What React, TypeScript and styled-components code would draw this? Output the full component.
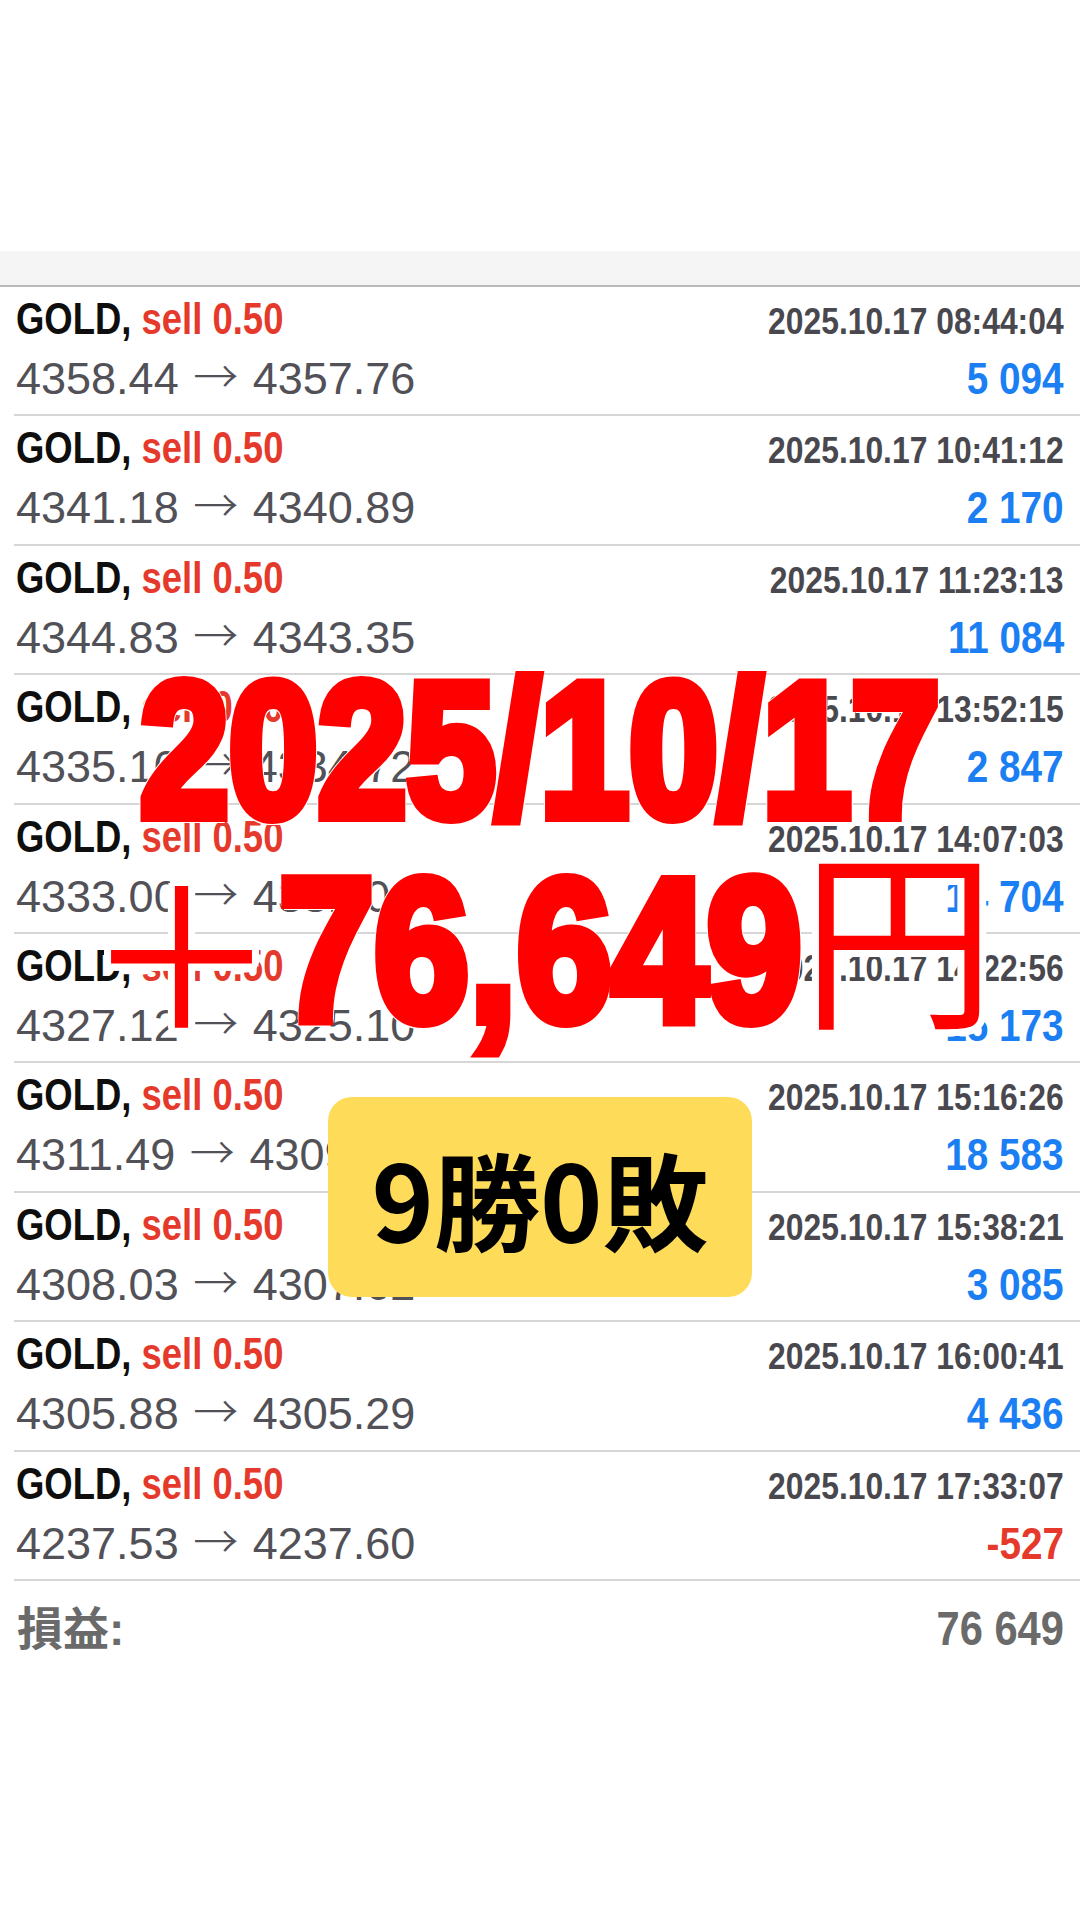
import React from "react";
import styled, { createGlobalStyle } from "styled-components";

const GlobalStyle = createGlobalStyle`
  html, body {
    margin: 0;
    padding: 0;
    background: #ffffff;
  }
  body {
    font-family: "Liberation Sans", Arial, "Noto Sans CJK JP", sans-serif;
  }
`;

const RED = "#e5392b";
const BLUE = "#1b7ff3";

// white outline round the big red caption
const halo = (r: number) =>
  Array.from({ length: 16 }, (_, i) => {
    const a = (i / 16) * Math.PI * 2;
    return `${(Math.cos(a) * r).toFixed(1)}px ${(Math.sin(a) * r).toFixed(1)}px 0 #fff`;
  }).join(", ");

const Page = styled.div`
  position: relative;
  width: 1080px;
  height: 1920px;
  padding-top: 251px;
  box-sizing: border-box;
  overflow: hidden;
  background: #ffffff;
`;

const HeaderBand = styled.div`
  height: 34px;
  background: #f5f5f5;
  border-bottom: 2px solid #b9b9b9;
`;

const List = styled.ul`
  list-style: none;
  margin: 0;
  padding: 0;
`;

const Row = styled.li`
  height: 129.4px;
  margin-left: 14px;
  padding: 2px 16px 0 2px;
  box-sizing: border-box;
  border-bottom: 2px solid #d6d6d6;
`;

const Line = styled.div`
  display: flex;
  justify-content: space-between;
  align-items: baseline;
  height: 60px;
  line-height: 60px;
  white-space: nowrap;
`;

const Instrument = styled.span`
  display: inline-block;
  font-weight: 700;
  font-size: 45px;
  color: #0e0e0e;
  transform: scaleX(0.81);
  transform-origin: left center;
`;

const Side = styled.span`
  color: ${RED};
`;

const Stamp = styled.span`
  display: inline-block;
  font-weight: 700;
  font-size: 37px;
  color: #48484e;
  transform: scaleX(0.86);
  transform-origin: right center;
`;

const Prices = styled.span`
  font-size: 45px;
  color: #515157;
`;

const Arrow = styled.span`
  font-family: "Noto Sans CJK JP", sans-serif;
  font-weight: 300;
  font-size: 45px;
  line-height: 0;
  margin: 0 2px;
`;

const Profit = styled.span<{ $loss?: boolean }>`
  display: inline-block;
  font-weight: 700;
  font-size: 45px;
  color: ${(p) => (p.$loss ? RED : BLUE)};
  transform: scaleX(0.86);
  transform-origin: right center;
`;

const TotalRow = styled.div`
  display: flex;
  justify-content: space-between;
  align-items: baseline;
  margin-left: 14px;
  padding: 5px 16px 0 3px;
  height: 84px;
  line-height: 84px;
`;

const TotalLabel = styled.span`
  font-family: "Liberation Sans", "Noto Sans CJK JP", sans-serif;
  font-weight: 700;
  font-size: 46px;
  color: #6a6a6a;
`;

const TotalValue = styled.span`
  display: inline-block;
  font-weight: 700;
  font-size: 49px;
  color: #6a6a6a;
  transform: scaleX(0.85);
  transform-origin: right center;
`;

const Headline = styled.div<{ $top: number }>`
  position: absolute;
  left: 0;
  right: 0;
  top: ${(p) => p.$top}px;
  display: flex;
  justify-content: center;
  align-items: center;
  white-space: nowrap;
  color: #ff0000;
  text-shadow: ${halo(7)};
  pointer-events: none;
`;

const HeavyDigits = styled.span<{ $size: number; $scale: number; $trim: number }>`
  position: relative;
  z-index: 1;
  display: inline-block;
  font-family: "Liberation Sans", Arial, sans-serif;
  font-weight: 700;
  font-size: ${(p) => p.$size}px;
  line-height: 1;
  margin: 0 ${(p) => -p.$trim}px;
  transform: scaleX(${(p) => p.$scale});
  -webkit-text-stroke: 12px #ff0000;
`;

const WideGlyph = styled.span<{ $shift: number }>`
  display: inline-block;
  font-family: "Noto Sans CJK JP", sans-serif;
  font-weight: 400;
  font-size: 194px;
  line-height: 1;
  transform: translateY(${(p) => p.$shift}px);
`;

const Badge = styled.div`
  position: absolute;
  left: 328px;
  top: 1097px;
  width: 424px;
  height: 200px;
  display: flex;
  align-items: center;
  justify-content: center;
  border-radius: 24px;
  background: #fedc5a;
  font-family: "Noto Sans CJK JP", sans-serif;
  font-weight: 700;
  font-size: 106px;
  line-height: 1;
  color: #000000;
`;

type Trade = {
  time: string;
  open: string;
  close: string;
  profit: string;
};

const trades: Trade[] = [
  { time: "08:44:04", open: "4358.44", close: "4357.76", profit: "5 094" },
  { time: "10:41:12", open: "4341.18", close: "4340.89", profit: "2 170" },
  { time: "11:23:13", open: "4344.83", close: "4343.35", profit: "11 084" },
  { time: "13:52:15", open: "4335.10", close: "4334.72", profit: "2 847" },
  { time: "14:07:03", open: "4333.00", close: "4331.04", profit: "14 704" },
  { time: "14:22:56", open: "4327.12", close: "4325.10", profit: "15 173" },
  { time: "15:16:26", open: "4311.49", close: "4309.01", profit: "18 583" },
  { time: "15:38:21", open: "4308.03", close: "4307.62", profit: "3 085" },
  { time: "16:00:41", open: "4305.88", close: "4305.29", profit: "4 436" },
  { time: "17:33:07", open: "4237.53", close: "4237.60", profit: "-527" },
];

const App: React.FC = () => {
  return (
    <Page>
      <GlobalStyle />
      <HeaderBand />
      <List>
        {trades.map((t) => (
          <Row key={t.time}>
            <Line>
              <Instrument>
                GOLD, <Side>sell 0.50</Side>
              </Instrument>
              <Stamp>2025.10.17 {t.time}</Stamp>
            </Line>
            <Line>
              <Prices>
                {t.open} <Arrow>→</Arrow> {t.close}
              </Prices>
              <Profit $loss={t.profit.startsWith("-")}>{t.profit}</Profit>
            </Line>
          </Row>
        ))}
      </List>
      <TotalRow>
        <TotalLabel>損益:</TotalLabel>
        <TotalValue>76 649</TotalValue>
      </TotalRow>

      <Headline $top={654}>
        <HeavyDigits $size={191} $scale={0.837} $trim={0}>
          2025/10/17
        </HeavyDigits>
      </Headline>
      <Headline $top={848}>
        <WideGlyph $shift={-4}>＋</WideGlyph>
        <HeavyDigits $size={203} $scale={0.842} $trim={49}>
          76,649
        </HeavyDigits>
        <WideGlyph $shift={-20}>円</WideGlyph>
      </Headline>

      <Badge>9勝0敗</Badge>
    </Page>
  );
};

export default App;
